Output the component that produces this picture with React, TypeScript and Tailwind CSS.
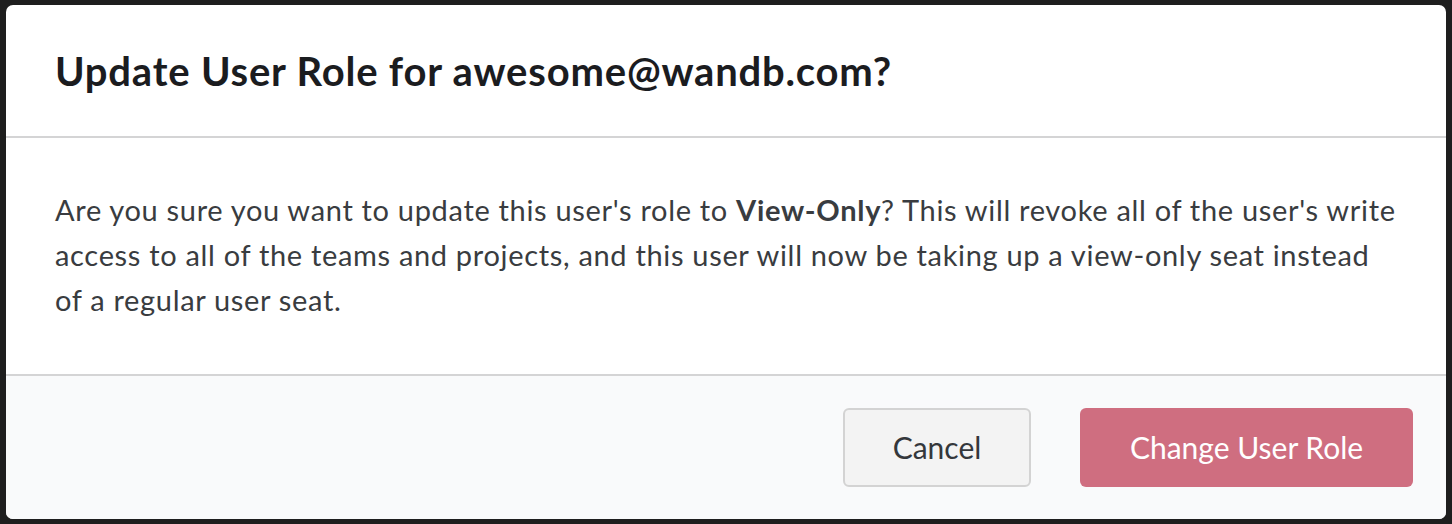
export default function App() {
  return (
    <div className="h-[524px] w-[1452px] bg-[#1e1e1e] pt-[5px] pl-[6px] font-['Lato',_'Noto_Sans',_sans-serif]">
      <div className="w-[1440px] h-[514px] rounded-[7px] overflow-hidden bg-white flex flex-col">
        {/* header */}
        <div className="h-[133px] flex items-center px-[49px] border-b-2 border-[#d4d4d5]">
          <h1 className="text-[40px] font-bold text-[#1b1c1f] tracking-[0.8px]">
            Update User Role for awesome@wandb.com?
          </h1>
        </div>

        {/* content */}
        <div className="h-[236px] px-[49px] pt-[49px] text-[29px] leading-[45px] tracking-[0.68px] text-[#393c40] whitespace-nowrap">
          Are you sure you want to update this user's role to <b className="font-bold">View-Only</b>? This will revoke all of the user's write
          <br />
          access to all of the teams and projects, and this user will now be taking up a view-only seat instead
          <br />
          of a regular user seat.
        </div>

        {/* actions */}
        <div className="flex-1 bg-[#f9fafb] border-t-2 border-[#d4d4d5] flex items-center justify-end gap-[49px] pr-[33px]">
          <button className="w-[188px] h-[79px] rounded-[6px] bg-[#f3f3f3] border-2 border-[#d3d3d3] text-[30px] text-[#34373b]">
            Cancel
          </button>
          <button className="w-[333px] h-[79px] rounded-[6px] bg-[#cf6e80] text-[30px] text-white">
            Change User Role
          </button>
        </div>
      </div>
    </div>
  )
}
